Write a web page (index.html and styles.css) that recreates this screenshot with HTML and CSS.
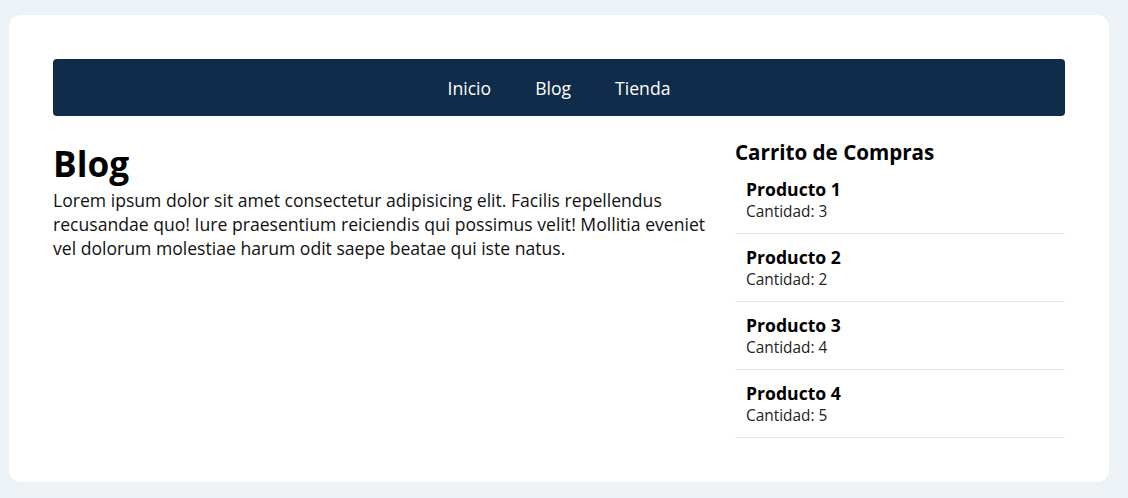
FILE: index.html
```html
<!DOCTYPE html>
<html lang="es">
<head>
<meta charset="utf-8">
<title>Blog</title>
<link rel="stylesheet" href="styles.css">
</head>
<body>
<div class="card">
  <nav class="nav">
    <a href="#">Inicio</a>
    <a href="#">Blog</a>
    <a href="#">Tienda</a>
  </nav>
  <div class="layout">
    <main class="main">
      <h1>Blog</h1>
      <p>Lorem ipsum dolor sit amet consectetur adipisicing elit. Facilis repellendus recusandae quo! Iure praesentium reiciendis qui possimus velit! Mollitia eveniet vel dolorum molestiae harum odit saepe beatae qui iste natus.</p>
    </main>
    <aside class="cart">
      <h2>Carrito de Compras</h2>
      <ul class="items">
        <li class="item"><div class="name">Producto 1</div><div class="qty">Cantidad: 3</div></li>
        <li class="item"><div class="name">Producto 2</div><div class="qty">Cantidad: 2</div></li>
        <li class="item"><div class="name">Producto 3</div><div class="qty">Cantidad: 4</div></li>
        <li class="item"><div class="name">Producto 4</div><div class="qty">Cantidad: 5</div></li>
      </ul>
    </aside>
  </div>
</div>
</body>
</html>
```
FILE: styles.css
```css
html, body {
  margin: 0;
  background: #edf2f6;
}
body {
  padding: 15px 0 16px 9px;
  font-family: "Open Sans", "Noto Sans", sans-serif;
  font-size: 17.6px;
  color: #111;
}
.card {
  width: 1100px;
  box-sizing: border-box;
  background: #fff;
  border-radius: 12px;
  padding: 44px;
}
.nav {
  background: #0f2d4a;
  border-radius: 4px;
  height: 57px;
  display: flex;
  justify-content: center;
  align-items: center;
  gap: 44px;
}
.nav a {
  color: #fff;
  text-decoration: none;
  font-size: 17.6px;
}
.layout {
  display: grid;
  grid-template-columns: 1fr 330px;
  gap: 24px;
  margin-top: 22px;
}
.main h1 {
  margin: 0;
  font-size: 35.2px;
  line-height: 50px;
  color: #000;
}
.main p {
  margin: 0;
  font-size: 17.6px;
  line-height: 24px;
  color: #111;
}
.cart h2 {
  margin: 0;
  font-size: 20.6px;
  line-height: 28px;
  color: #000;
}
.items {
  list-style: none;
  margin: 0;
  padding: 0;
}
.item {
  padding: 11px 11px 10px;
  border-bottom: 1px solid #e5e7eb;
}
.name {
  font-weight: 700;
  font-size: 17.6px;
  line-height: 24px;
  color: #000;
}
.qty {
  font-size: 15.4px;
  line-height: 22px;
  color: #222;
}
```
